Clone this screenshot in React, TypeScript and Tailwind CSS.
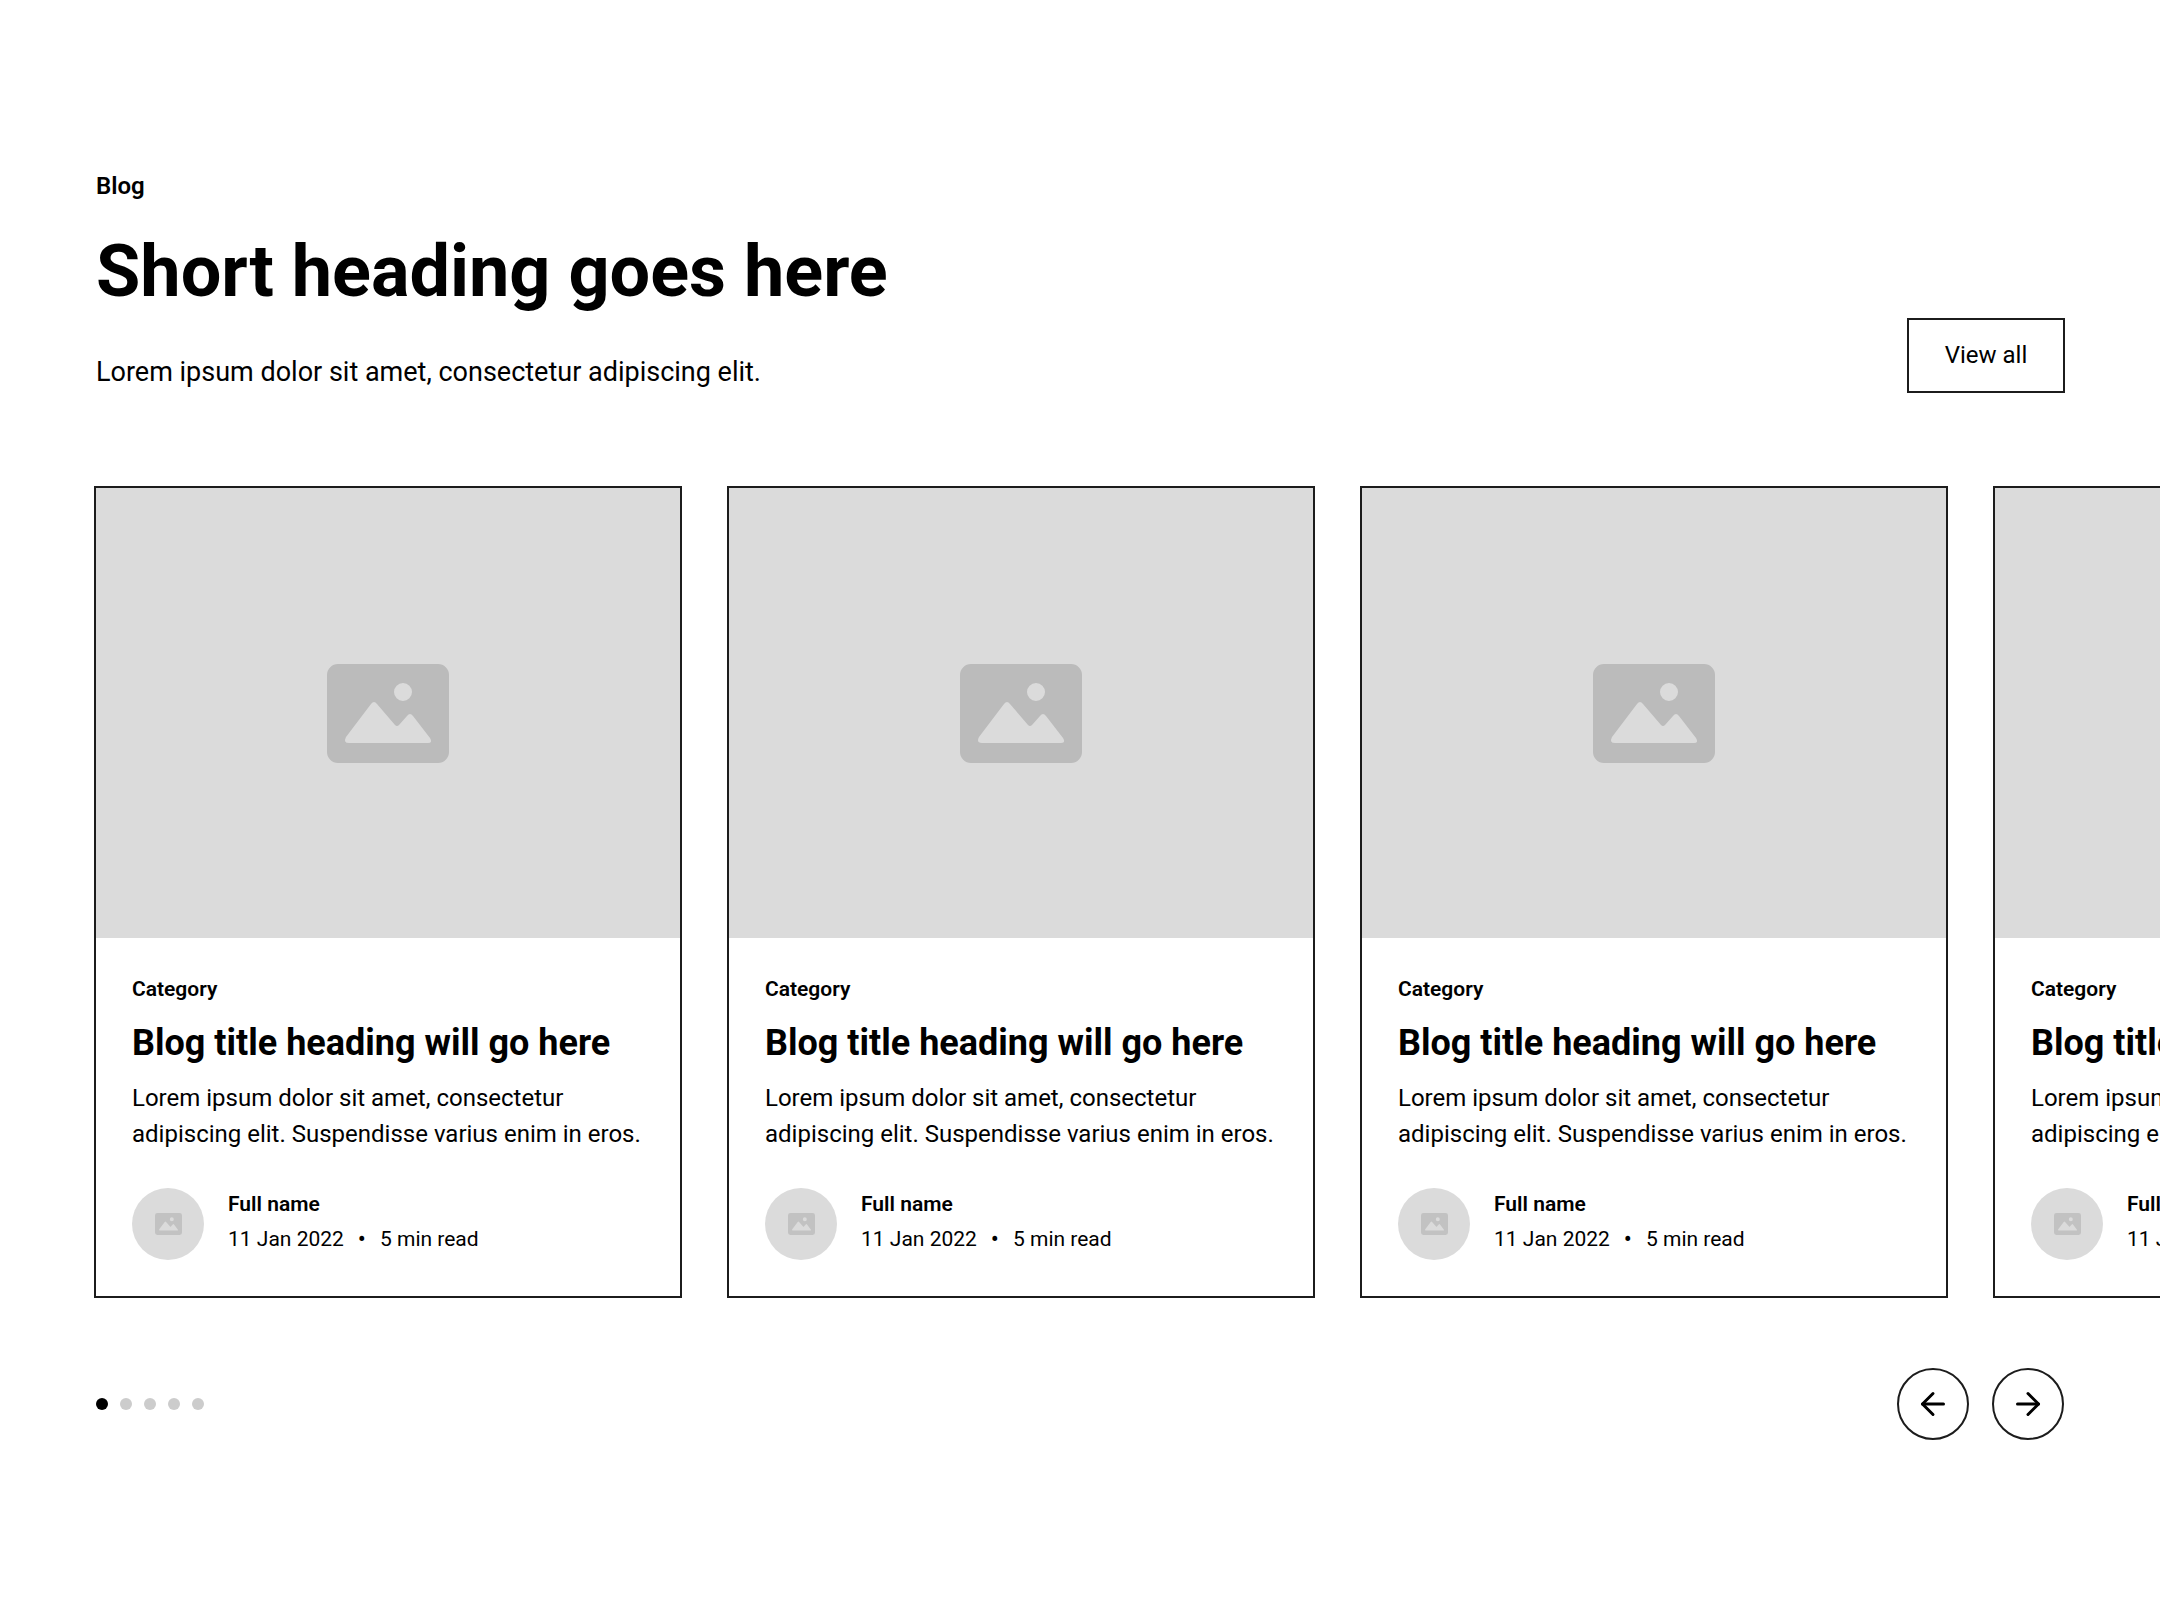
import { ArrowLeft, ArrowRight } from "lucide-react";

function ImageIcon({ className }: { className: string }) {
  return (
    <svg viewBox="0 0 122 99" fill="currentColor" className={className}>
      <path
        fillRule="evenodd"
        d="M11 0H111A11 11 0 0 1 122 11V88A11 11 0 0 1 111 99H11A11 11 0 0 1 0 88V11A11 11 0 0 1 11 0ZM76 19A9 9 0 1 0 76 37A9 9 0 1 0 76 19ZM44 40L19 73Q16 79 22 79H101Q106 79 103 74L86 52Q83 48 80 52L72 61Q70 63 68 61L50 40Q47 36 44 40Z"
      />
    </svg>
  );
}

function BlogCard() {
  return (
    <div className="w-[588px] shrink-0 border-2 border-[#1c1c1c] bg-white">
      <div className="flex h-[450px] items-center justify-center bg-[#dbdbdb] pt-[2px]">
        <ImageIcon className="h-[99px] w-[122px] text-[#bbbbbb]" />
      </div>
      <div className="px-9 py-9">
        <p className="text-[21px] font-semibold leading-[31.5px]">Category</p>
        <h3 className="mt-[13px] text-[36px] font-bold leading-[50.4px]">Blog title heading will go here</h3>
        <p className="mt-[11px] text-[24px] leading-[36px]">
          Lorem ipsum dolor sit amet, consectetur adipiscing elit. Suspendisse varius enim in eros.
        </p>
        <div className="mt-9 flex items-center gap-6">
          <div className="flex h-[72px] w-[72px] shrink-0 items-center justify-center rounded-full bg-[#dbdbdb]">
            <ImageIcon className="h-[22px] w-[27px] text-[#c2c2c2]" />
          </div>
          <div className="pb-[3px]">
            <p className="text-[21px] font-semibold leading-[31.5px]">Full name</p>
            <div className="mt-1 flex items-center text-[21px] leading-[31.5px]">
              <span>11 Jan 2022</span>
              <span className="mx-[14px] text-[24px]">•</span>
              <span>5 min read</span>
            </div>
          </div>
        </div>
      </div>
    </div>
  );
}

export default function App() {
  return (
    <div className="overflow-hidden bg-white px-[96px] py-[168px] font-['Roboto',sans-serif] text-black">
      <div className="-mr-px flex items-end justify-between">
        <div>
          <p className="text-[24px] font-semibold leading-[36px]">Blog</p>
          <h2 className="mt-[25px] text-[72px] font-bold leading-[86.4px]">Short heading goes here</h2>
          <p className="mt-[37px] text-[27px] leading-[40.5px]">Lorem ipsum dolor sit amet, consectetur adipiscing elit.</p>
        </div>
        <button className="h-[75px] w-[158px] border-2 border-[#1c1c1c] text-[24px] leading-[36px]">View all</button>
      </div>

      <div className="mt-[93px] -ml-[2px] flex gap-[45px]">
        <BlogCard />
        <BlogCard />
        <BlogCard />
        <BlogCard />
      </div>

      <div className="mt-[70px] flex items-center justify-between">
        <div className="flex gap-3">
          <span className="h-3 w-3 rounded-full bg-black" />
          <span className="h-3 w-3 rounded-full bg-[#cccccc]" />
          <span className="h-3 w-3 rounded-full bg-[#cccccc]" />
          <span className="h-3 w-3 rounded-full bg-[#cccccc]" />
          <span className="h-3 w-3 rounded-full bg-[#cccccc]" />
        </div>
        <div className="flex gap-[23px]">
          <button className="flex h-[72px] w-[72px] items-center justify-center rounded-full border-2 border-[#1c1c1c]">
            <ArrowLeft className="h-9 w-9" strokeWidth={2} />
          </button>
          <button className="flex h-[72px] w-[72px] items-center justify-center rounded-full border-2 border-[#1c1c1c]">
            <ArrowRight className="h-9 w-9" strokeWidth={2} />
          </button>
        </div>
      </div>
    </div>
  );
}
